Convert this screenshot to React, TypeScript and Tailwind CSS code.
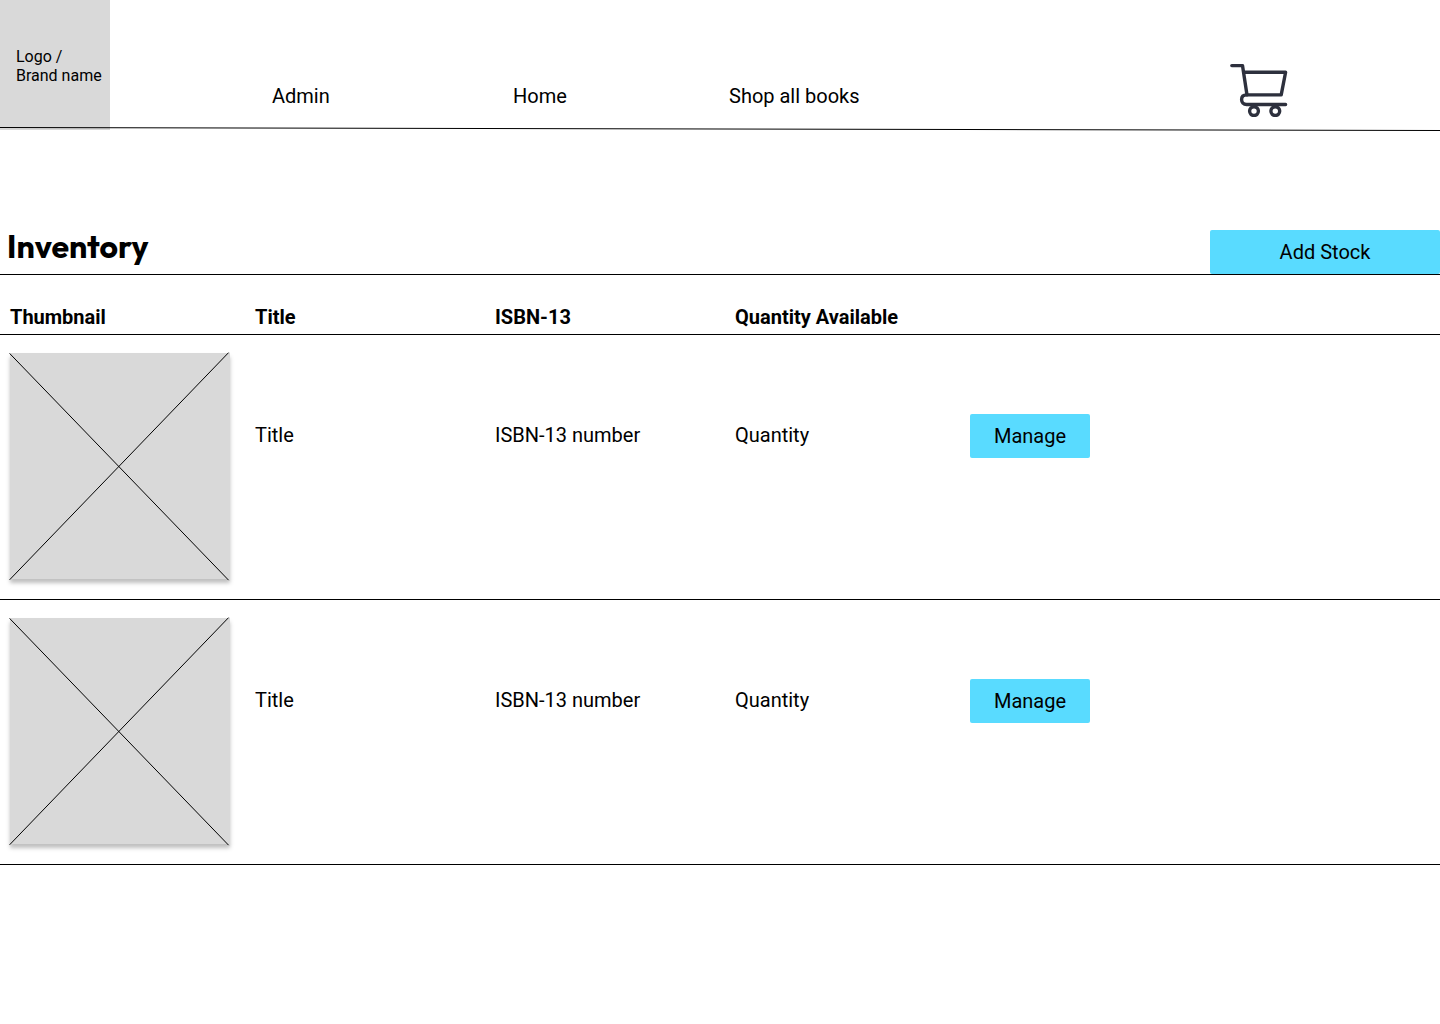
const books = [
  { id: 1, title: "Title", isbn: "ISBN-13 number", quantity: "Quantity" },
  { id: 2, title: "Title", isbn: "ISBN-13 number", quantity: "Quantity" },
];

function CartIcon() {
  return (
    <svg
      width="58"
      height="54"
      viewBox="0 0 58 54"
      fill="none"
      stroke="#2d303d"
      strokeWidth="3.4"
      strokeLinecap="round"
      strokeLinejoin="round"
      aria-hidden="true"
    >
      <path d="M1.8 2.6H12.5L17 31.9" />
      <path d="M13.6 9.2H55.6L51.2 31.9H16.6C13.2 31.9 11.6 34 11.6 36.6C11.6 39.4 13.4 41.5 16.6 41.5H55.6" />
      <circle cx="24" cy="48.1" r="4.4" />
      <circle cx="45.3" cy="48.1" r="4.4" />
    </svg>
  );
}

function Header() {
  return (
    <header className="relative flex h-[130px]">
      <a href="#" className="w-[110px] shrink-0 bg-[#d9d9d9] pt-[47px] pl-4 text-base leading-[19px] whitespace-nowrap">
        Logo /<br />
        Brand name
      </a>
      <nav className="flex pt-[84px] pl-[162px] text-xl leading-6 whitespace-nowrap">
        <a href="#admin" className="w-[241px]">Admin</a>
        <a href="#home" className="w-[216px]">Home</a>
        <a href="#shop">Shop all books</a>
      </nav>
      <button type="button" aria-label="Cart" className="mt-[63px] mr-[152px] ml-auto self-start">
        <CartIcon />
      </button>
      <svg
        className="absolute top-[127px] left-0 h-1 w-full"
        viewBox="0 0 1440 4"
        preserveAspectRatio="none"
        aria-hidden="true"
      >
        <line x1="0" y1="0.5" x2="1440" y2="3.5" stroke="#000" />
      </svg>
    </header>
  );
}

function Thumbnail() {
  return (
    <div className="h-[226px] w-[220px] bg-[#d9d9d9] shadow-[0_4px_4px_rgba(0,0,0,0.25)]">
      <svg
        width="220"
        height="226"
        viewBox="0 0 220 226"
        stroke="#000"
        className="overflow-visible"
        role="img"
        aria-label="Book cover"
      >
        <path d="M-0.4 0.4L218.6 227.2M-0.4 226.8L218.6 -0.4" />
      </svg>
    </div>
  );
}

export default function App() {
  return (
    <div className="min-h-screen bg-white font-['Roboto',sans-serif] text-black">
      <Header />
      <main className="pt-[100px]">
        <div className="flex h-[45px] items-start justify-between border-b border-black">
          <h1 className="pl-[7px] font-['Outfit','Lato',sans-serif] text-[32px] leading-8 font-bold">Inventory</h1>
          <button type="button" className="h-11 w-[230px] rounded-xs bg-[#59dbff] text-xl leading-6">
            Add Stock
          </button>
        </div>
        <table className="w-full table-fixed border-collapse text-left text-xl leading-6">
          <colgroup>
            <col className="w-[245px]" />
            <col className="w-[240px]" />
            <col className="w-[240px]" />
            <col className="w-[245px]" />
            <col />
          </colgroup>
          <thead>
            <tr className="h-[59px] border-b border-black align-top font-bold">
              <th className="pt-[30px] pl-2.5">Thumbnail</th>
              <th className="pt-[30px] pl-2.5">Title</th>
              <th className="pt-[30px] pl-2.5">ISBN-13</th>
              <th className="pt-[30px] pl-2.5">Quantity Available</th>
              <td />
            </tr>
          </thead>
          <tbody>
            {books.map((book) => (
              <tr key={book.id} className="h-[265px] border-b border-black align-top">
                <td className="pt-[18px] pl-2.5">
                  <Thumbnail />
                </td>
                <td className="pt-[88px] pl-2.5">{book.title}</td>
                <td className="pt-[88px] pl-2.5">{book.isbn}</td>
                <td className="pt-[88px] pl-2.5">{book.quantity}</td>
                <td className="pt-[79px]">
                  <button type="button" className="h-11 w-[120px] rounded-xs bg-[#59dbff]">
                    Manage
                  </button>
                </td>
              </tr>
            ))}
          </tbody>
        </table>
      </main>
    </div>
  );
}
